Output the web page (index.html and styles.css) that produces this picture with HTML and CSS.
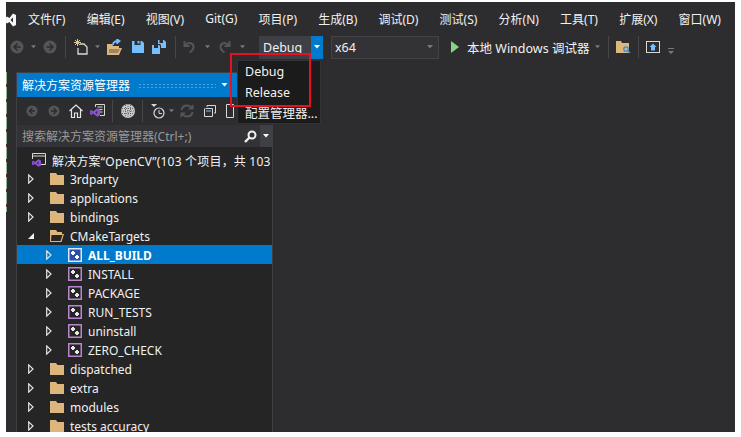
FILE: index.html
```html
<!DOCTYPE html>
<html lang="zh-CN">
<head>
    <meta charset="UTF-8">
    <title>OpenCV - Visual Studio</title>
    <link rel="stylesheet" href="styles.css">
</head>
<body>
    <svg class="defs" xmlns="http://www.w3.org/2000/svg">
        <symbol id="closed" viewBox="0 0 6 10"><path d="M.7.9 5 5 .7 9.1z" fill="none" stroke="#e6e6e6" stroke-width="1.2"/></symbol>
        <symbol id="open" viewBox="0 0 6 10"><path d="M0 8h6V2z" fill="#f1f1f1"/></symbol>
        <symbol id="folder" viewBox="0 0 14 12"><path d="M0 0h6l1.500 2H14v10H0z" fill="#dcb67a"/></symbol>
        <symbol id="folder-open" viewBox="0 0 14 12"><path d="M0 0h6l1.500 2H12v2h2l-2.500 8H0z" fill="#dcb67a"/><path d="M1.500 5h11l-2 6h-9.500z" fill="#252526"/></symbol>
        <symbol id="proj" viewBox="0 0 14 14"><rect x=".75" y=".75" width="12.500" height="12.500" fill="none" stroke="#b984d0" stroke-width="1.500"/><path d="M4 3h2v1h1v2H6v1H4V6H3V4h1zM8 7h2v1h1v2h-1v1H8v-1H7V8h1z" fill="#e8e8e8"/></symbol>
        <symbol id="proj-sel" viewBox="0 0 14 14"><rect width="14" height="14" fill="#2a4fa8"/><rect x=".75" y=".75" width="12.500" height="12.500" fill="none" stroke="#dfe6ff" stroke-width="1.500"/><path d="M4 3h2v1h1v2H6v1H4V6H3V4h1zM8 7h2v1h1v2h-1v1H8v-1H7V8h1z" fill="#fff"/></symbol>
        <symbol id="circle-left" viewBox="0 0 14 14"><circle cx="7" cy="7" r="6.500" fill="#555"/><path d="M7.500 3.500 4 7l3.500 3.500M4 7h6.500" fill="none" stroke="#2d2d30" stroke-width="1.600"/></symbol>
        <symbol id="circle-right" viewBox="0 0 14 14"><circle cx="7" cy="7" r="6.500" fill="#555"/><path d="M6.500 3.500 10 7l-3.500 3.500M10 7H3.500" fill="none" stroke="#2d2d30" stroke-width="1.600"/></symbol>
        <symbol id="caret" viewBox="0 0 6 4"><path d="M0 0h6L3 3.500z" fill="currentColor"/></symbol>
        <symbol id="vs" viewBox="0 0 14 12"><path d="M0 3.500 2 2.500l2.500 2L10 0l4 2v8l-4 2-5.500-4.500L2 9.500 0 8.500zM2 5v2l1-1zM10 3.500 7.500 6 10 8.500z" fill="#8f4fd8"/></symbol>
    </svg>

    <div class="app">
        <div class="edge-marks"></div>

        <div class="menubar">
            <svg class="logo" width="10" height="14" viewBox="0 0 10 14"><path fill-rule="evenodd" d="M1 3.500 3.500 5 7 .5l3 1.500v10l-3 1.500L3.500 9 1 10.500 0 9.500v-5zM7 4.500 4.500 7 7 9.500z" fill="#f5f5f5"/></svg>
            <span>文件(F)</span>
            <span>编辑(E)</span>
            <span>视图(V)</span>
            <span>Git(G)</span>
            <span>项目(P)</span>
            <span>生成(B)</span>
            <span>调试(D)</span>
            <span>测试(S)</span>
            <span>分析(N)</span>
            <span>工具(T)</span>
            <span>扩展(X)</span>
            <span>窗口(W)</span>
        </div>

        <div class="toolbar">
            <svg class="ti t-back" width="14" height="14"><use href="#circle-left"/></svg>
            <svg class="ti t-c1 dim" width="5" height="4"><use href="#caret"/></svg>
            <svg class="ti t-fwd" width="14" height="14"><use href="#circle-right"/></svg>
            <div class="sep t-s1"></div>
            <svg class="ti t-new" width="15" height="16" viewBox="0 0 15 16">
                <path d="M6 5h4l3 3v7H4V9" fill="none" stroke="#d8d8d8" stroke-width="1.300"/>
                <path d="M3.500 0v7M0 3.500h7M1 1l5 5M6 1 1 6" stroke="#e8c77a" stroke-width="1"/>
            </svg>
            <svg class="ti t-c2 dim" width="5" height="4"><use href="#caret"/></svg>
            <svg class="ti t-openf" width="16" height="16" viewBox="0 0 16 16">
                <path d="M0 5h5l1 2h6v2h3l-3 7H0z" fill="#dcb67a"/>
                <path d="M2 10h11l-2 4H2z" fill="#2d2d30" opacity=".35"/>
                <path d="M6 6c0-3 2-4 5-4M9.500 0l3 2-3 2.500" fill="none" stroke="#75beff" stroke-width="1.800"/>
            </svg>
            <svg class="ti t-save" width="12" height="12" viewBox="0 0 12 12"><path d="M0 0h2.500v4h6V0H10l2 2v10H0z" fill="#75beff"/><path d="M5.500 0h2v2.500h-2z" fill="#75beff"/></svg>
            <svg class="ti t-saveall" width="14" height="14" viewBox="0 0 14 14"><path d="M0 5h2v3h4V5h1l1 1v8H0z" fill="#75beff"/><path d="M6 0h1.500v3h3.500V0h1l2 2v6H9V5L8 4H6z" fill="#75beff"/></svg>
            <div class="sep t-s2"></div>
            <svg class="ti t-undo" width="13" height="14" viewBox="0 0 13 14"><path d="M1.500 1v5h5M2 5.500C4 3 6.500 2.500 8.500 3.500c3 1.500 3 6-2 9" fill="none" stroke="#555" stroke-width="2"/></svg>
            <svg class="ti t-c3 dim" width="5" height="4"><use href="#caret"/></svg>
            <svg class="ti t-redo" width="13" height="14" viewBox="0 0 13 14"><path d="M11.500 1v5h-5M11 5.500C9 3 6.500 2.500 4.500 3.500c-3 1.500-3 6 2 9" fill="none" stroke="#555" stroke-width="2"/></svg>
            <svg class="ti t-c4 dim" width="5" height="4"><use href="#caret"/></svg>

            <div class="combo-debug">
                <span class="combo-text">Debug</span>
                <div class="combo-btn"><svg width="6" height="4" class="white"><use href="#caret"/></svg></div>
            </div>
            <div class="combo-arch">
                <span class="combo-text">x64</span>
                <svg width="6" height="4" class="dim"><use href="#caret"/></svg>
            </div>

            <svg class="ti t-play" width="8" height="12" viewBox="0 0 8 12"><path d="M0 0l8 6-8 6z" fill="#89d185"/></svg>
            <span class="run-text">本地 Windows 调试器</span>
            <svg class="ti t-c5 dim" width="5" height="4"><use href="#caret"/></svg>
            <div class="sep t-s3"></div>
            <svg class="ti t-find" width="15" height="12" viewBox="0 0 15 12"><path d="M0 0h5l1 2h7v10H0z" fill="#dcb67a"/><circle cx="10" cy="8" r="2.200" fill="none" stroke="#2f8fe0" stroke-width="1.300"/><path d="M11.500 9.500 14 12" stroke="#2f8fe0" stroke-width="1.500"/></svg>
            <div class="sep t-s4"></div>
            <svg class="ti t-web" width="14" height="12" viewBox="0 0 14 12"><rect x=".5" y=".5" width="13" height="11" fill="none" stroke="#d8d8d8"/><path d="M7 2.500 3.500 6H5v3.500h4V6h1.500z" fill="#75beff"/></svg>
            <svg class="ti t-more dim" width="6" height="6" viewBox="0 0 6 6"><path d="M0 0h6v1H0zM0 3h6L3 6z" fill="currentColor"/></svg>
        </div>

        <div class="workspace">
            <div class="panel">
                <div class="panel-title">
                    <span>解决方案资源管理器</span>
                    <div class="grip"></div>
                    <svg width="7" height="4" class="white"><use href="#caret"/></svg>
                </div>

                <div class="panel-tools">
                    <svg class="pi p-back" width="12" height="12"><use href="#circle-left"/></svg>
                    <svg class="pi p-fwd" width="12" height="12"><use href="#circle-right"/></svg>
                    <svg class="pi p-home" width="14" height="14" viewBox="0 0 14 14"><path d="M.5 7 7 1l6.500 6M2.500 6v7.500h3V9h3v4.500h3V6" fill="none" stroke="#e6e6e6" stroke-width="1.200"/></svg>
                    <svg class="pi p-sol" width="15" height="14" viewBox="0 0 15 14">
                        <path d="M5.500 3V.5h9v11H10" fill="none" stroke="#d8d8d8"/>
                        <path d="M7.500 3h5M9 5.500h3.500M10 8h2.500" stroke="#d8d8d8"/>
                        <use href="#vs" x="0" y="4" width="10" height="9"/>
                    </svg>
                    <div class="sep p-s1"></div>
                    <svg class="pi p-globe" width="14" height="14" viewBox="0 0 14 14"><circle cx="7" cy="7" r="7" fill="#c8c8c8"/><path d="M4.500 1v12M7 0v14M9.500 1v12M1 4.500h12M0 7h14M1 9.500h12" stroke="#555" stroke-width=".8" stroke-dasharray="1 1"/></svg>
                    <div class="sep p-s2"></div>
                    <svg class="pi p-clock" width="14" height="15" viewBox="0 0 14 15"><circle cx="8" cy="9" r="5" fill="none" stroke="#d8d8d8" stroke-width="1.200"/><path d="M8 6v3.500h3" fill="none" stroke="#d8d8d8"/><path d="M0 0h6L3 3z" fill="#d8d8d8"/></svg>
                    <svg class="pi p-c1 dim" width="5" height="4"><use href="#caret"/></svg>
                    <svg class="pi p-sync" width="14" height="14" viewBox="0 0 14 14"><path d="M1.500 6C2 3 4.500 1.500 7 1.500c2 0 3.500 1 4.500 2.500M12.500 8c-.5 3-3 4.500-5.500 4.500-2 0-3.500-1-4.500-2.500" fill="none" stroke="#555" stroke-width="2"/><path d="M13.500 0v5.500H8zM.5 14V8.500H6z" fill="#555"/></svg>
                    <svg class="pi p-copy" width="12" height="12" viewBox="0 0 12 12"><path d="M3 2V.5h8.500V8H10M1.500 3.500H8.500V11.500H.5V3.500" fill="none" stroke="#d8d8d8"/><path d="M2 6h5" stroke="#75beff"/></svg>
                    <svg class="pi p-page" width="12" height="14" viewBox="0 0 12 14"><path d="M.5.5h7v13H.5z" fill="none" stroke="#d8d8d8"/></svg>
                </div>

                <div class="search">
                    <span class="search-text">搜索解决方案资源管理器(Ctrl+;)</span>
                    <svg class="search-icon" width="13" height="13" viewBox="0 0 13 13"><circle cx="8" cy="5" r="3.500" fill="none" stroke="#f1f1f1" stroke-width="2"/><path d="M5.500 7.500 1 12" stroke="#f1f1f1" stroke-width="2.400"/></svg>
                    <div class="search-btn"><svg width="6" height="4" class="white"><use href="#caret"/></svg></div>
                </div>

                <div class="tree">
                    <div class="row row-root">
                        <svg class="row-icon" width="14" height="14" viewBox="0 0 14 14"><path d="M.5 6V.5h13v11H8M.5 3h13" fill="none" stroke="#d8d8d8"/><use href="#vs" x="0" y="6" width="9" height="8"/></svg>
                        <span class="root-name">解决方案“OpenCV”(103 个项目，共 103</span>
                    </div>
                    <div class="row lv1"><svg class="arrow" width="6" height="10"><use href="#closed"/></svg><svg class="row-icon" width="14" height="12"><use href="#folder"/></svg><span>3rdparty</span></div>
                    <div class="row lv1"><svg class="arrow" width="6" height="10"><use href="#closed"/></svg><svg class="row-icon" width="14" height="12"><use href="#folder"/></svg><span>applications</span></div>
                    <div class="row lv1"><svg class="arrow" width="6" height="10"><use href="#closed"/></svg><svg class="row-icon" width="14" height="12"><use href="#folder"/></svg><span>bindings</span></div>
                    <div class="row lv1"><svg class="arrow" width="6" height="10"><use href="#open"/></svg><svg class="row-icon" width="14" height="12"><use href="#folder-open"/></svg><span>CMakeTargets</span></div>
                    <div class="row lv2 selected"><svg class="arrow" width="6" height="10"><use href="#closed"/></svg><svg class="row-icon" width="14" height="14"><use href="#proj-sel"/></svg><span>ALL_BUILD</span></div>
                    <div class="row lv2"><svg class="arrow" width="6" height="10"><use href="#closed"/></svg><svg class="row-icon" width="14" height="14"><use href="#proj"/></svg><span>INSTALL</span></div>
                    <div class="row lv2"><svg class="arrow" width="6" height="10"><use href="#closed"/></svg><svg class="row-icon" width="14" height="14"><use href="#proj"/></svg><span>PACKAGE</span></div>
                    <div class="row lv2"><svg class="arrow" width="6" height="10"><use href="#closed"/></svg><svg class="row-icon" width="14" height="14"><use href="#proj"/></svg><span>RUN_TESTS</span></div>
                    <div class="row lv2"><svg class="arrow" width="6" height="10"><use href="#closed"/></svg><svg class="row-icon" width="14" height="14"><use href="#proj"/></svg><span>uninstall</span></div>
                    <div class="row lv2"><svg class="arrow" width="6" height="10"><use href="#closed"/></svg><svg class="row-icon" width="14" height="14"><use href="#proj"/></svg><span>ZERO_CHECK</span></div>
                    <div class="row lv1"><svg class="arrow" width="6" height="10"><use href="#closed"/></svg><svg class="row-icon" width="14" height="12"><use href="#folder"/></svg><span>dispatched</span></div>
                    <div class="row lv1"><svg class="arrow" width="6" height="10"><use href="#closed"/></svg><svg class="row-icon" width="14" height="12"><use href="#folder"/></svg><span>extra</span></div>
                    <div class="row lv1"><svg class="arrow" width="6" height="10"><use href="#closed"/></svg><svg class="row-icon" width="14" height="12"><use href="#folder"/></svg><span>modules</span></div>
                    <div class="row lv1"><svg class="arrow" width="6" height="10"><use href="#closed"/></svg><svg class="row-icon" width="14" height="12"><use href="#folder"/></svg><span>tests accuracy</span></div>
                </div>
            </div>
        </div>

        <div class="config-menu">
            <div class="config-item">Debug</div>
            <div class="config-item">Release</div>
            <div class="config-item">配置管理器...</div>
        </div>
        <div class="red-box"></div>
    </div>
</body>
</html>
```

FILE: styles.css
```css
body {
    margin: 0;
    background: #fff;
    font-family: "Noto Sans", "Noto Sans CJK SC", sans-serif;
    font-size: 12px;
    color: #f1f1f1;
    overflow: hidden;
}

.defs {
    display: none;
}

.dim {
    color: #777;
}

.white {
    color: #fff;
}

.app {
    position: relative;
    margin: 2px 0 0 6px;
    width: 729px;
    height: 430px;
    background: #2d2d30;
    overflow: hidden;
}

.edge-marks {
    position: absolute;
    left: 0;
    top: 70px;
    width: 1px;
    height: 140px;
    background: repeating-linear-gradient(to bottom, #8fb98f 0, #8fb98f 12px, #5a2a2a 12px, #5a2a2a 15px);
}

/* menu */
.menubar {
    display: flex;
    align-items: center;
    gap: 21.200px;
    height: 32px;
    padding-top: 1px;
    box-sizing: border-box;
    white-space: nowrap;
}

.logo {
    margin: 2px -9.200px 0 0;
}

/* main toolbar */
.toolbar {
    display: flex;
    align-items: center;
    height: 26px;
    padding-left: 4px;
}

.ti, .pi {
    flex-shrink: 0;
}

.sep {
    width: 1px;
    height: 22px;
    background: #46464a;
    flex-shrink: 0;
}

.t-c1 { margin-left: 7px; }
.t-fwd { margin-left: 7px; }
.t-s1 { margin-left: 8px; }
.t-new { margin-left: 8px; }
.t-c2 { margin-left: 6px; }
.t-openf { margin-left: 7px; }
.t-save { margin-left: 9px; }
.t-saveall { margin-left: 8px; }
.t-s2 { margin-left: 9px; }
.t-undo { margin-left: 7px; }
.t-c3 { margin-left: 9px; }
.t-redo { margin-left: 8px; }
.t-c4 { margin-left: 9px; }

.combo-debug {
    display: flex;
    align-items: center;
    justify-content: space-between;
    width: 64px;
    height: 23px;
    margin-left: 14px;
    padding-left: 4px;
    box-sizing: border-box;
    background: #3f3f46;
}

.combo-btn {
    display: flex;
    align-items: center;
    justify-content: center;
    width: 12px;
    height: 23px;
    background: #007acc;
}

.combo-arch {
    display: flex;
    align-items: center;
    justify-content: space-between;
    width: 108px;
    height: 23px;
    margin-left: 8px;
    padding: 0 5px 0 3px;
    box-sizing: border-box;
    border: 1px solid #434346;
    background: #333337;
}

.combo-text {
    font-size: 12.500px;
}

.t-play { margin-left: 12px; }

.run-text {
    margin-left: 8px;
    font-size: 12.500px;
    white-space: nowrap;
}

.t-c5 { margin-left: 6px; }
.t-s3 { margin-left: 8px; }
.t-find { margin-left: 7px; }
.t-s4 { margin-left: 7px; }
.t-web { margin-left: 7px; }
.t-more { margin-left: 8px; margin-top: 8px; }

/* solution explorer */
.workspace {
    padding: 12px 0 0 10px;
}

.panel {
    width: 255px;
    height: 360px;
    background: #252526;
    border: 1px solid #3f3f46;
    border-bottom: 0;
}

.panel-title {
    display: flex;
    align-items: center;
    height: 24px;
    padding-left: 5px;
    background: #007acc;
    color: #fff;
    white-space: nowrap;
}

.grip {
    width: 78px;
    height: 5px;
    margin: 0 5px 0 8px;
    background-image: radial-gradient(#4da6e0 .7px, transparent 1px);
    background-size: 4px 3px;
}

.panel-tools {
    display: flex;
    align-items: center;
    height: 28px;
    padding-left: 9px;
    background: #2d2d30;
}

.p-fwd { margin-left: 10px; }
.p-home { margin-left: 9px; }
.p-sol { margin-left: 7px; }
.p-s1 { margin-left: 7px; }
.p-globe { margin-left: 8px; }
.p-s2 { margin-left: 7px; }
.p-clock { margin-left: 8px; }
.p-c1 { margin-left: 4px; }
.p-sync { margin-left: 6px; }
.p-copy { margin-left: 10px; }
.p-page { margin-left: 10px; }

.search {
    display: flex;
    align-items: center;
    height: 22px;
    padding-left: 5px;
    background: #333337;
}

.search-text {
    color: #999;
    white-space: nowrap;
    flex: 1;
}

.search-icon {
    margin-right: 3px;
}

.search-btn {
    display: flex;
    align-items: center;
    justify-content: center;
    width: 12px;
    height: 22px;
    background: #3f3f46;
}

.tree {
    padding-top: 3px;
    overflow: hidden;
}

.row {
    display: flex;
    align-items: center;
    height: 19px;
    white-space: nowrap;
    overflow: hidden;
}

.row span {
    padding-top: 2px;
}

.row-root { padding-left: 15px; }
.lv1 { padding-left: 11px; }
.lv2 { padding-left: 29px; }

.root-name {
    letter-spacing: .2px;
}

.arrow {
    flex-shrink: 0;
    margin-right: 16px;
}

.row-icon {
    flex-shrink: 0;
    margin-right: 6px;
}

.selected {
    background: #007acc;
    color: #fff;
    font-weight: 700;
}

/* config dropdown */
.config-menu {
    position: absolute;
    left: 231px;
    top: 58px;
    width: 82px;
    height: 62px;
    background: #1b1b1c;
    border: 1px solid #333337;
    font-size: 12.500px;
}

.config-item {
    height: 21px;
    line-height: 21px;
    padding-left: 7px;
    white-space: nowrap;
}

.red-box {
    position: absolute;
    left: 224px;
    top: 51px;
    width: 77px;
    height: 50px;
    border: 2px solid #e81123;
}
```
